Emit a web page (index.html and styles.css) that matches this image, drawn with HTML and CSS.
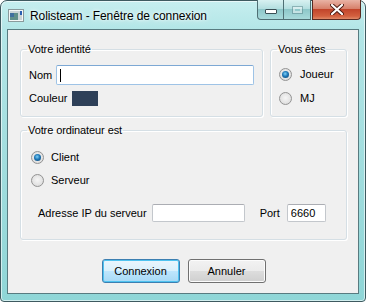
FILE: index.html
```html
<!DOCTYPE html>
<html lang="fr">
<head>
    <meta charset="UTF-8">
    <title>Rolisteam - Fenêtre de connexion</title>
    <link rel="stylesheet" href="styles.css">
</head>
<body>
    <div class="window">
        <div class="titlebar">
            <svg class="app-icon" width="16" height="13" viewBox="0 0 16 13">
                <rect x="0.5" y="0.5" width="15" height="12" fill="#f4f7f7" stroke="#8a9a9c"/>
                <rect x="2" y="2" width="12" height="9" fill="#c9d3d6"/>
                <rect x="2" y="4" width="8" height="7" fill="#5f8f8a"/>
                <rect x="2" y="4" width="4" height="4" fill="#3f6f9e"/>
                <rect x="12" y="2" width="2" height="4" fill="#2a5fb0"/>
            </svg>
            <span class="title">Rolisteam - Fenêtre de connexion</span>
            <div class="caption-buttons">
                <div class="cap-btn cap-min"><span class="min-glyph"></span></div>
                <div class="cap-btn cap-max"><span class="max-glyph"></span></div>
                <div class="cap-btn cap-close">
                    <svg width="14" height="11" viewBox="0 0 14 11">
                        <path d="M2 1 L12 10 M12 1 L2 10" stroke="#4b1a12" stroke-width="4" stroke-linecap="round"/>
                        <path d="M2 1 L12 10 M12 1 L2 10" stroke="#ffffff" stroke-width="2.2" stroke-linecap="round"/>
                    </svg>
                </div>
            </div>
        </div>

        <div class="client">
            <div class="top-row">
                <fieldset class="group group-identity">
                    <legend>Votre identité</legend>
                    <div class="form-row row-name">
                        <label>Nom</label>
                        <div class="field field-focus"><span class="caret"></span></div>
                    </div>
                    <div class="form-row row-color">
                        <label>Couleur</label>
                        <span class="swatch"></span>
                    </div>
                </fieldset>
                <fieldset class="group group-role">
                    <legend>Vous êtes</legend>
                    <div class="radio-row first"><span class="radio checked"></span>Joueur</div>
                    <div class="radio-row"><span class="radio"></span>MJ</div>
                </fieldset>
            </div>

            <fieldset class="group group-computer">
                <legend>Votre ordinateur est</legend>
                <div class="radio-row first"><span class="radio checked"></span>Client</div>
                <div class="radio-row"><span class="radio"></span>Serveur</div>
                <div class="form-row row-ip">
                    <label>Adresse IP du serveur</label>
                    <input type="text" class="field field-ip">
                    <label class="port-label">Port</label>
                    <input type="text" class="field field-port" value="6660">
                </div>
            </fieldset>

            <div class="buttons">
                <button class="btn btn-default">Connexion</button>
                <button class="btn">Annuler</button>
            </div>
        </div>
    </div>
</body>
</html>
```

FILE: styles.css
```css
body {
    margin: 0;
    padding: 0;
    background-color: #ffffff;
    font-family: "Liberation Sans", Arial, sans-serif;
    font-size: 11px;
    color: #000000;
}

.window {
    box-sizing: border-box;
    width: 366px;
    height: 302px;
    display: flex;
    flex-direction: column;
    border: 1px solid #3e5a60;
    border-radius: 7px 7px 4px 4px;
    background: linear-gradient(180deg, #c6eeef 0, #b3e6e7 28px, #9fdcdd 60%, #8fd6d7 100%);
    box-shadow: inset 0 0 0 1px rgba(255, 255, 255, 0.6);
}

/* Barre de titre */
.titlebar {
    height: 28px;
    display: flex;
    align-items: center;
    padding-left: 7px;
}

.app-icon {
    margin-top: 1px;
    margin-right: 6px;
}

.title {
    font-size: 12px;
    letter-spacing: -0.1px;
    color: #000000;
    text-shadow: 0 0 6px rgba(255, 255, 255, 0.9), 0 0 3px rgba(255, 255, 255, 0.9);
    margin-top: 1px;
}

.caption-buttons {
    margin-left: auto;
    margin-right: 4px;
    align-self: flex-start;
    margin-top: -1px;
    display: flex;
}

.cap-btn {
    box-sizing: border-box;
    height: 20px;
    display: flex;
    align-items: center;
    justify-content: center;
    border: 1px solid #4f6f74;
    border-top: none;
}

.cap-min {
    width: 27px;
    border-radius: 0 0 0 4px;
    background: linear-gradient(180deg, #d8f1f1 0, #b4dfe0 45%, #8ec7c9 50%, #a8dadb 100%);
}

.cap-max {
    width: 27px;
    border-left: none;
    background: linear-gradient(180deg, #d8f1f1 0, #b4dfe0 45%, #8ec7c9 50%, #a8dadb 100%);
}

.cap-close {
    width: 49px;
    margin-left: 1px;
    border-radius: 0 0 4px 0;
    border-color: #5a2a22;
    background: linear-gradient(180deg, #e9b3a5 0, #d7816c 45%, #c2452b 50%, #d3603f 85%, #e08a68 100%);
}

.min-glyph {
    width: 10px;
    height: 3px;
    margin-top: 4px;
    background-color: #ffffff;
    border: 1px solid #3b4f55;
    border-radius: 1px;
}

.max-glyph {
    width: 9px;
    height: 6px;
    border: 1px solid rgba(90, 130, 135, 0.5);
    box-shadow: inset 0 0 0 2px rgba(255, 255, 255, 0.45);
}

/* Zone cliente */
.client {
    flex: 1;
    margin: 0 6px 7px 6px;
    border: 1px solid #587b80;
    background-color: #f0f0f0;
    padding: 12px 11px 0 12px;
    display: flex;
    flex-direction: column;
}

.top-row {
    display: grid;
    grid-template-columns: 1fr 77px;
    gap: 7px;
}

.group {
    margin: 0;
    min-width: 0;
    padding: 0 8px 10px 8px;
    border: 1px solid #d5dfe5;
    border-radius: 3px;
    box-shadow: inset 1px 1px 0 #ffffff, 1px 1px 0 #ffffff;
}

.group legend {
    padding: 0 1px;
    margin-left: -2px;
    line-height: 14px;
    letter-spacing: -0.1px;
}

.form-row {
    display: flex;
    align-items: center;
}

.form-row label {
    line-height: 15px;
}

.row-name {
    margin-top: 9px;
    gap: 4px;
}

.row-color {
    margin-top: 6px;
    gap: 4px;
}

.field {
    box-sizing: border-box;
    height: 20px;
    background-color: #ffffff;
    border: 1px solid #c3c7cc;
    border-top-color: #abadb3;
    border-radius: 2px;
    font-family: "Liberation Sans", Arial, sans-serif;
    font-size: 11px;
    color: #000000;
    padding: 0 3px;
    outline: none;
}

.field-focus {
    flex: 1;
    display: flex;
    align-items: center;
    border-color: #9ec3e6;
    border-top-color: #7da8d4;
}

.caret {
    width: 1px;
    height: 13px;
    background-color: #000000;
}

.swatch {
    width: 26px;
    height: 15px;
    background-color: #2e4058;
}

.radio-row {
    display: flex;
    align-items: center;
    gap: 7px;
    height: 16px;
    margin-top: 8px;
}

.radio-row.first {
    margin-top: 10px;
}

.radio {
    box-sizing: border-box;
    width: 13px;
    height: 13px;
    border-radius: 50%;
    border: 1px solid #939393;
    background: radial-gradient(circle at 50% 45%, #f6f6f6 0, #e3e3e3 60%, #d2d2d2 100%);
    display: flex;
    align-items: center;
    justify-content: center;
}

.radio.checked::after {
    content: "";
    width: 7px;
    height: 7px;
    border-radius: 50%;
    background: radial-gradient(circle at 45% 40%, #7fd2f8 0, #1f78b8 45%, #0d3f68 100%);
}

.group-role .radio-row {
    gap: 8px;
}

.group-computer {
    margin-top: 6px;
    padding-bottom: 17px;
}

.group-computer .radio-row {
    margin-left: 2px;
}

.group-computer .radio-row.first {
    margin-top: 12px;
}

.group-computer .radio-row + .radio-row {
    margin-top: 7px;
}

.row-ip {
    margin-top: 16px;
    margin-left: 9px;
}

.field-ip {
    width: 93px;
    height: 18px;
    margin-left: 5px;
}

.port-label {
    margin-left: 15px;
}

.field-port {
    width: 39px;
    height: 18px;
    margin-left: 7px;
}

/* Boutons du bas */
.buttons {
    display: flex;
    justify-content: center;
    gap: 8px;
    margin-top: 19px;
}

.btn {
    box-sizing: border-box;
    width: 78px;
    height: 24px;
    font-family: "Liberation Sans", Arial, sans-serif;
    font-size: 11px;
    color: #000000;
    border: 1px solid #707070;
    border-radius: 3px;
    background: linear-gradient(180deg, #f2f2f2 0, #ebebeb 50%, #dddddd 50%, #cfcfcf 100%);
    box-shadow: inset 0 0 0 1px #fcfcfc;
    padding: 0;
}

.btn-default {
    border-color: #3c7fb1;
    background: linear-gradient(180deg, #eaf6fd 0, #d9f0fc 50%, #bee6fd 50%, #a7d9f5 100%);
    box-shadow: inset 0 0 0 1px #4fc3f0;
}
```
